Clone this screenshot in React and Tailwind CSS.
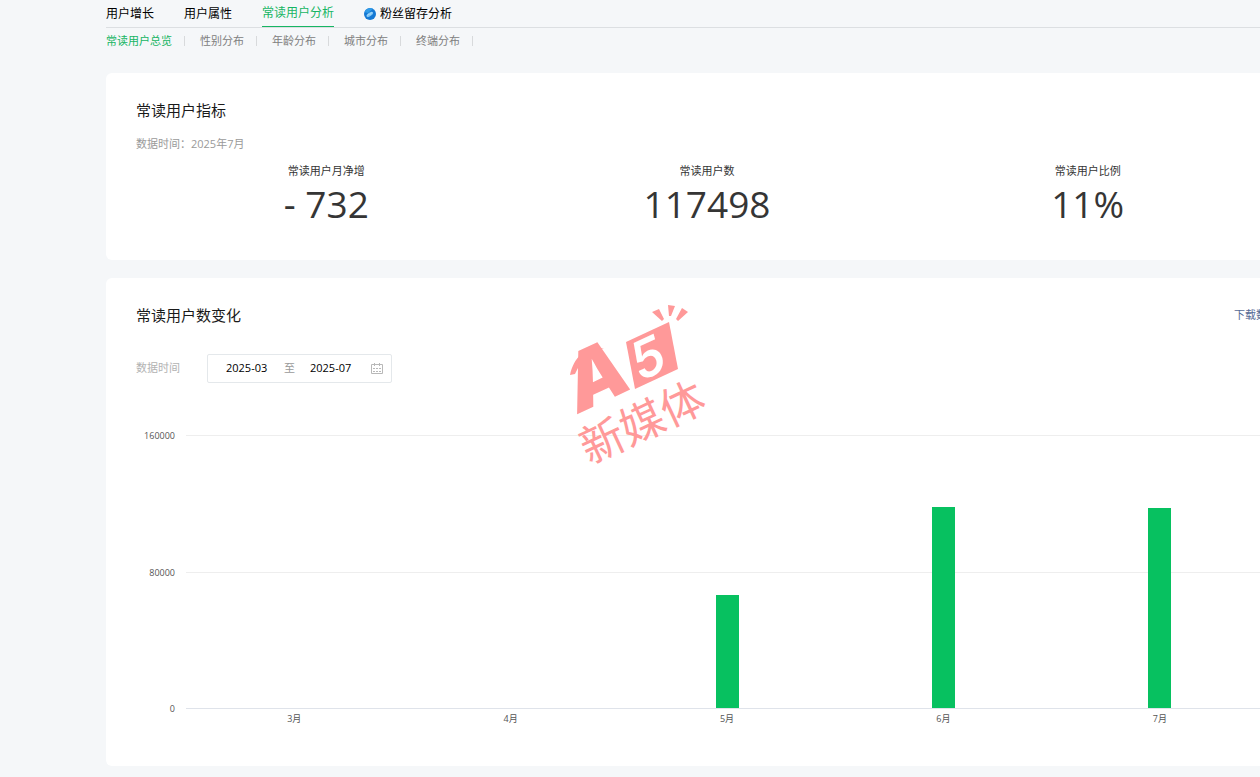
const tabs = [
    { label: "用户增长" },
    { label: "用户属性" },
    { label: "常读用户分析", active: true },
    { label: "粉丝留存分析", badge: true },
];

const subTabs = ["常读用户总览", "性别分布", "年龄分布", "城市分布", "终端分布"];

const metrics = [
    { label: "常读用户月净增", value: "- 732" },
    { label: "常读用户数", value: "117498" },
    { label: "常读用户比例", value: "11%" },
];

const MAX = 160000;

const months = [
    { label: "3月", value: 0 },
    { label: "4月", value: 0 },
    { label: "5月", value: 66300 },
    { label: "6月", value: 118000 },
    { label: "7月", value: 117498 },
];

export default function App() {
    return (
        <div className="min-h-screen overflow-hidden bg-[#f5f7f9] pb-3 pl-[106px] font-['Open_Sans','Noto_Sans_CJK_SC',sans-serif] text-[#353535]">
            {/* the content column is wider than the window and runs off its right edge */}
            <div className="-mr-12">
                <Tabs />
                <SubTabs />
                <main className="mt-[22px] flex flex-col gap-[18px]">
                    <Metrics />
                    <Trend />
                </main>
            </div>
        </div>
    );
}

function Tabs() {
    return (
        <nav className="flex h-7 gap-[30px] border-b border-[#dcdfe2] text-[12px] text-black">
            {tabs.map((tab) => (
                <a
                    key={tab.label}
                    href="#"
                    className={
                        tab.active
                            ? "flex h-[27px] items-center border-b border-[#16b563] text-[#16b563]"
                            : "flex h-[27px] items-center gap-1"
                    }
                >
                    {tab.badge && <PlanetIcon />}
                    {tab.label}
                </a>
            ))}
        </nav>
    );
}

function SubTabs() {
    return (
        <nav className="flex pt-[3px] text-[11px] leading-5 text-[#808080]">
            {subTabs.map((label, i) => (
                <div key={label} className="flex items-center">
                    <a href="#" className={i === 0 ? "text-[#16b563]" : ""}>
                        {label}
                    </a>
                    <span className="mr-[15px] ml-3 h-[10px] w-px bg-[#d8dadc]" />
                </div>
            ))}
        </nav>
    );
}

function Metrics() {
    return (
        <section className="rounded-md bg-white px-[30px] pt-[27px] pb-[31px]">
            <h2 className="text-[15px] leading-5 text-[#1a1a1a]">常读用户指标</h2>
            <p className="mt-4 text-[11px] leading-4 text-[#9a9a9a]">数据时间：2025年7月</p>
            <dl className="mt-[11px] grid grid-cols-3 text-center">
                {metrics.map((m) => (
                    <div key={m.label}>
                        <dt className="text-[11px] leading-4">{m.label}</dt>
                        <dd className="text-[37px] leading-[50px]">{m.value}</dd>
                    </div>
                ))}
            </dl>
        </section>
    );
}

function Trend() {
    return (
        <section className="relative rounded-md bg-white px-[30px] pt-[27px] pb-[41px]">
            <div className="flex items-center justify-between leading-5">
                <h2 className="text-[15px] leading-5 text-[#1a1a1a]">常读用户数变化</h2>
                <a href="#" className="text-[11px] text-[#576b95]">下载数据</a>
            </div>
            <div className="mt-[29px] flex items-center text-[11px]">
                <label htmlFor="from" className="w-[71px] text-[#b2b2b2]">数据时间</label>
                <div className="flex h-[29px] w-[185px] items-center rounded-xs border border-[#e4e8eb] pr-2 pl-[18px] text-black">
                    <input id="from" defaultValue="2025-03" className="w-[46px] outline-none" />
                    <label htmlFor="to" className="mr-[15px] ml-3 text-[#9a9a9a]">至</label>
                    <input id="to" defaultValue="2025-07" className="w-[46px] outline-none" />
                    <button type="button" aria-label="选择日期" className="ml-auto">
                        <CalendarIcon />
                    </button>
                </div>
            </div>
            <Chart />
            <Watermark />
        </section>
    );
}

function Chart() {
    return (
        <div className="mt-[52px] flex pr-[10px] text-[9px] text-[#555]">
            <div className="-mt-[5px] flex h-[285px] w-[39px] flex-col justify-between text-right leading-3">
                <span>160000</span>
                <span>80000</span>
                <span>0</span>
            </div>
            <div className="ml-[11px] grid flex-1">
                <div className="col-start-1 row-start-1 h-[274px] border-b border-[#dfe3ea]">
                    <div className="h-[137px] border-t border-[#eeeeee]" />
                    <div className="h-[136px] border-t border-[#eeeeee]" />
                </div>
                <div className="relative col-start-1 row-start-1 flex h-[273px] items-end">
                    {months.map((m) => (
                        <div key={m.label} className="flex h-full flex-1 items-end justify-center">
                            <div
                                className="w-[23px] bg-[#07c160]"
                                style={{ height: `${(m.value / MAX) * 100}%` }}
                            />
                        </div>
                    ))}
                </div>
                <div className="col-start-1 row-start-2 flex pt-1 leading-3">
                    {months.map((m) => (
                        <span key={m.label} className="flex-1 text-center">{m.label}</span>
                    ))}
                </div>
            </div>
        </div>
    );
}

function PlanetIcon() {
    return (
        <svg viewBox="0 0 12 12" className="size-3" aria-hidden="true">
            <circle cx="6" cy="6" r="6" fill="#1478d4" />
            <path d="M0.6 4.2A6 6 0 0 1 9 0.8L4 5Z" fill="#2f9be8" />
            <ellipse cx="5.8" cy="6.4" rx="3.8" ry="1.8" transform="rotate(-35 5.8 6.4)" fill="#7cc4f4" />
            <path d="M3.4 7.6l1.6-2M5.6 7l2.4-2.8" stroke="#c4e6fc" strokeWidth="0.7" />
        </svg>
    );
}

function CalendarIcon() {
    return (
        <svg viewBox="0 0 12 12" className="size-3" fill="none" stroke="#b8b8b8" aria-hidden="true">
            <path d="M0.5 1.5h11v9h-11zM3.5 0v3M8.5 0v3" />
            <path d="M2 5.5h8M2 8.5h8" strokeDasharray="2 1" />
        </svg>
    );
}

function Watermark() {
    return (
        <svg
            viewBox="0 0 180 190"
            className="pointer-events-none absolute top-3 left-[444px] h-[190px] w-[180px] overflow-visible"
            fill="#ff9999"
            aria-hidden="true"
        >
            {/* rays */}
            <path d="M102 22l7-3 5 10-2 2zM118 15l7 1-4 10-2 0zM132 18l6 4-10 9-2-2z" />
            {/* swoosh over the A */}
            <path d="M20 85C24 66 36 57 54 58C42 61 32 68 25 84Z" />
            <g transform="rotate(-25 30 124)">
                <text x="29" y="123" fontSize="78" fontWeight="900" fontStyle="italic" fontFamily="Inter">A</text>
            </g>
            <path d="M76 52L119 32L128 79L85 99Z" />
            <g transform="rotate(-25 94 92)" fill="#fff">
                <text x="91" y="90" fontSize="52" fontWeight="600" fontStyle="italic" fontFamily="Inter">5</text>
            </g>
            <g transform="rotate(-25 44 178)">
                <text x="41" y="173" fontSize="44" fontFamily="Noto Sans CJK SC">新媒体</text>
            </g>
        </svg>
    );
}
